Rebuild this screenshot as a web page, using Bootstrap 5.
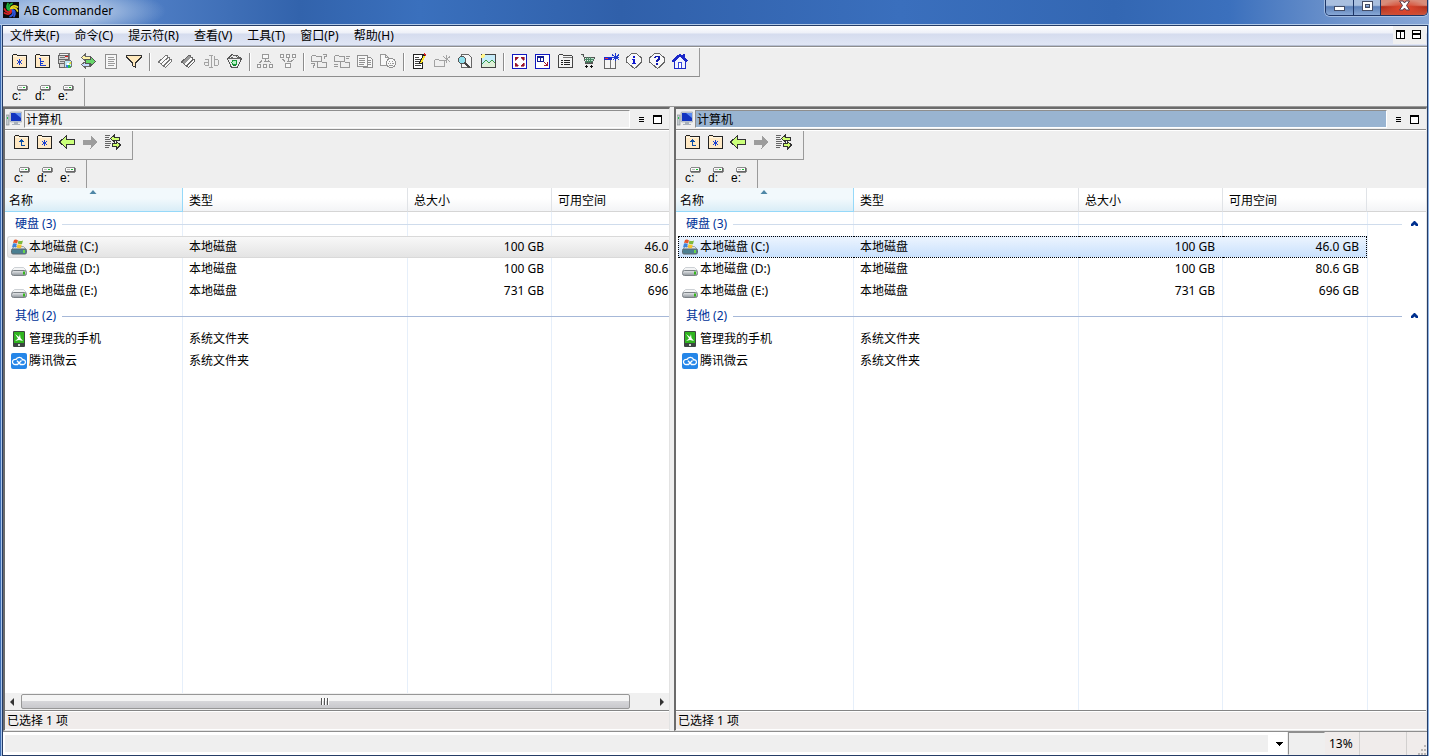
<!DOCTYPE html>
<html lang="zh-CN">
<head>
<meta charset="utf-8">
<meta name="viewport" content="width=device-width, initial-scale=1">
<title>AB Commander</title>
<link href="https://cdn.jsdelivr.net/npm/bootstrap@5.3.0/dist/css/bootstrap.min.css" rel="stylesheet">
<style>
  body { font: 12px/16px "Noto Sans", "Noto Sans CJK SC", sans-serif; color: #000; background: #6f9ad2; }
  svg { display: block; flex: none; }
  .ico { width: 16px; height: 16px; }
  .px { shape-rendering: crispEdges; }

  /* window frame */
  .frame { padding: 0 1px 0 2px; background: linear-gradient(90deg, #3b6ab2 1px, #a9c5ea 1px, #a9c5ea 2px, #8fb4e4 2px); }
  .caption { height: 25px; margin: 0 -1px 0 -2px; padding-left: 3px; border-bottom: 1px solid #b4cbe8;
    background:
      radial-gradient(ellipse 100px 24px at 66px 11px, #c3d4eccc 30%, #a5bfe388 65%, transparent 100%),
      linear-gradient(90deg, #7ea2d6 0, #4c7bc2 160px, #3263ac 300px, #3a70bd 420px, #3060aa 620px, #3a6fbd 900px, #3367b3 78%, #3b70bd 86%, #6f94cc 94%, #86a6d6 100%); }
  .caption h1 { font-size: 12px; line-height: 16px; padding: 3px 0 0 5px; }
  .logo { margin-top: 2px; }
  .client { border: 1px solid #253c66; background: #efefef; }

  .btn-tool { width: 23px; height: 28px; border: 0; padding: 0 0 2px 0; border-radius: 0; background: transparent; color: #000; font: inherit; display: flex; align-items: center; justify-content: center; flex: none; }
  .bar1 .btn-tool, .pbar1 .btn-tool { justify-content: flex-start; padding-left: 3px; }
  .btn-tool:hover { background: #dfe6f2; }
  .winbtns { height: 16px; border: 1px solid #1d3566; border-top: 0; border-radius: 0 0 5px 5px; overflow: hidden; box-shadow: 0 0 0 1px #c5d7ef99; margin-right: 1px; }
  .btn-tool.winbtn { height: 15px; width: 27px; padding: 0; align-items: flex-start; background: linear-gradient(#a9bfdf 0 35%, #5c80b8 45%, #88a8d6); }
  .btn-tool.winbtn + .winbtn { border-left: 1px solid #1d3566; }
  .btn-tool.close-win { width: 47px; background: radial-gradient(ellipse at 50% 60%, #d8452c 20%, transparent 75%), linear-gradient(#d88c7a 0 35%, #ad2a17 45%, #c9583f); }

  /* menu and tool bars */
  .menubar { height: 20px; padding: 0 1px 1px 0; gap: 1px; border-bottom: 1px solid #b7bfd2; background: linear-gradient(#fff, #edf0f8 7px, #d5dcee 8px, #e0e6f5); }
  .menubar a { padding: 2px 7px 0; color: #000; text-decoration: none; }
  .mdi { background: #f0f0f0; padding: 0 5px 2px 3px; gap: 7px; }
  .vsep { width: 2px; height: 18px; margin: 0 3px; border-left: 1px solid #8c8c8c; border-right: 1px solid #fff; }
  .strip { padding: 0 7px 0 5px; border-right: 1px solid #9a9a9a; }
  .bar1 { border-top: 1px solid #8e8e8e; box-shadow: inset 0 1px #fff; height: 31px; padding-top: 1px; }
  .bar1 .strip { border-bottom: 1px solid #8e8e8e; }
  .bar2 { height: 30px; border-bottom: 1px solid #9a9a9a; padding-top: 1px; }
  .btn-drive { flex-direction: column; align-items: stretch; justify-content: start; padding: 6px 3px 0 4px; font: 12px/12px "Liberation Sans", sans-serif; text-align: left; }
  .btn-drive svg { align-self: flex-end; width: 11px; height: 7px; }
  .btn-drive span { margin-top: -1px; }

  /* panes */
  .panes { display: grid; grid-template-columns: 667fr 753fr; gap: 4px; }
  .pane { border: solid; border-width: 2px 1px 1px 2px; border-color: #6b6b6b #e3e3e3 #e3e3e3 #6b6b6b; min-width: 0; }
  .pane-title { height: 21px; border-bottom: 1px solid #8e8e8e; padding-top: 1px; }
  .pane-title > .pcbox { width: 19px; padding: 1px 0 0 1px; }
  .pane-name { border: 1px solid; border-color: #8e8e8e #fff #fff #8e8e8e; margin-bottom: 1px; padding: 1px 0 0 1px; line-height: 15px; background: #f0f0f0; }
  .pane.current .pane-name { background: #99b4d1; }
  .pane-ctl { width: 39px; gap: 5px; padding-left: 6px; }
  .pane-ctl .btn-tool { width: 11px; height: 17px; padding: 0; }
  .pbar1 { height: 30px; border-top: 1px solid #fff; }
  .pbar1 .strip { border-bottom: 1px solid #9a9a9a; height: 29px; }
  .pbar1 .btn-tool { height: 24px; }
  .pbar2 { height: 28px; }

  .listing { background:
      linear-gradient(#e6effa, #e6effa) 177px 0 / 1px 100% no-repeat,
      linear-gradient(#e6effa, #e6effa) 402px 0 / 1px 100% no-repeat,
      linear-gradient(#e6effa, #e6effa) 546px 0 / 1px 100% no-repeat,
      linear-gradient(#e6effa, #e6effa) 691px 0 / 1px 100% no-repeat, #fff; overflow: hidden; }
  .files { table-layout: fixed; border-collapse: separate; border-spacing: 0; width: 100%; min-width: 691px; }
  .files th { height: 24px; padding: 3px 6px 0; font-weight: 400; border-right: 1px solid #e0e3e7; border-bottom: 1px solid #d5d5d5; background: linear-gradient(#fff 45%, #f3f4f6); }
  .files th:last-child { border-right: 0; }
  .files th.sorted { padding-left: 4px; border-right-color: #96d9f9; border-bottom-color: #96d9f9; position: relative; background: linear-gradient(#f2f9fc 45%, #d9edf7); }
  .sorted svg { position: absolute; top: 2px; left: 84px; }
  .files td { height: 22px; padding: 0 6px; white-space: nowrap; }
  .files td.edge { padding: 0; }
  .files td.fname { padding-left: 4px; }
  .fname .d-flex { gap: 2px; }
  .files td.num { text-align: right; padding-right: 8px; }
  .files .group td { height: 24px; padding: 0 7px 0 10px; color: #003399; }
  .files .group.later td { height: 26px; padding-top: 2px; }
  .rule { height: 1px; background: #cfdcec; margin: 0 8px 0 6px; }
  .later .rule { background: #a6b8d8; }
  .idle td:not(.edge, .rest) { background: linear-gradient(#f8f8f8, #e4e4e4); border: solid #d9d9d9; border-width: 1px 0; }
  .idle td.fname { border-left-width: 1px !important; padding-left: 3px !important; border-radius: 3px 0 0 3px; }
  .chosen td:not(.edge, .rest) { background: linear-gradient(#ecf4fe, #c9e1fd); border: dotted #000; border-width: 1px 0; }
  .chosen td.fname { border-left-width: 1px !important; padding-left: 3px !important; }
  .chosen td.last { border-right-width: 1px !important; padding-right: 7px !important; }

  .hscroll { height: 17px; background: #f0f0f0; }
  .hscroll .btn-tool { width: 16px; height: 17px; padding: 0 3px 0 0; }
  .hscroll .btn-tool:last-child { padding: 0 0 0 1px; }
  .thumb { width: 609px; border: 1px solid #979797; border-radius: 2px; margin: 1px 0; background: linear-gradient(#f5f5f5 0 45%, #d6d6d9 50%, #c8c8cc); }
  .pane-status { height: 20px; border-top: 1px solid #858585; background: #f0eceb; padding: 2px 2px 0; box-shadow: inset 0 1px #fff, inset 0 -1px #fff; }

  /* command line and status cells */
  .cmdrow { height: 24px; border-top: 1px solid #8e8e8e; }
  .cmdline { border: 3px solid #fff; border-left-width: 2px; background: #fff; margin-right: 1px; }
  .cmdline select { appearance: none; width: 100%; height: 17px; border: 0; border-radius: 0; background: linear-gradient(#efefef, #efefef) 0 0 / calc(100% - 16px) 100% no-repeat; }
  .cmdline svg { position: absolute; right: 1px; top: 7px; pointer-events: none; }
  .scell { border-right: 1px solid #d2d0cf; background: #f0eceb; padding: 4px 4px 0; }
  .scell.blank { background: #efefef; border: 1px solid; border-color: #8e8e8e #efefef #efefef #8e8e8e; }
</style>
</head>
<body>

<svg width="0" height="0" class="position-absolute" aria-hidden="true">
  <defs>
    <symbol id="fold" viewBox="0 0 16 16"><path d="M1.500 3.500V2.500L2.500 1.500H5.500L6.500 2.500H15.500V14.500H1.500Z" fill="#ffe9c4" stroke="#222"/><path d="M2 3.500H15" stroke="#fff6e2"/></symbol>
    <symbol id="star" viewBox="0 0 16 16"><use href="#fold"/><path d="M8.500 6V12M6 7L11 11M11 7L6 11" stroke="#1b3fd0"/></symbol>
    <symbol id="tree" viewBox="0 0 16 16"><use href="#fold"/><path d="M5 5.500H7M6.500 6V12.500M7 8.500H10M7 10.500H9M7 12.500H12" stroke="#1b3fd0" fill="none"/></symbol>
    <symbol id="up" viewBox="0 0 16 16"><use href="#fold"/><path d="M8.500 5V11.500H12M6 7.500H11M7 6.500H10" stroke="#0b4fa8" fill="none"/></symbol>
    <symbol id="server" viewBox="0 0 16 16"><path d="M1.500 2.500L3 .5H12.500L11.500 2.500" fill="#f2f2f2" stroke="#777"/><path d="M1.500 2.500H11.500V6.500H1.500ZM1.500 6.500H11.500V10.500H1.500ZM2.500 10.500H10V14.500H2.500Z" fill="#d5d5d5" stroke="#666"/><path d="M12.500 1V7" stroke="#888"/><path d="M8 3.500H11" stroke="#e02020"/><path d="M3 4.500H8M3 8.500H8" stroke="#777"/><circle cx="11" cy="11" r="4" fill="#bfe7f3" stroke="#777"/><path d="M11 11L14 8V11Z" fill="#e5e52c"/><path d="M11 11L8 13L11 15Z" fill="#3a7ee0"/><path d="M11 11L14 14L11 15Z" fill="#27bd4d"/><rect x="10" y="10" width="2" height="2" fill="#fff"/></symbol>
    <symbol id="swap" viewBox="0 0 16 16"><path d="M1.500 4.500L5.500 1V3.500H10.500V6H5.500V8Z" fill="#fff3a8" stroke="#666"/><path d="M1.500 11.500L5.500 8.500V10.500H9V13.500H5.500V15Z" fill="#c9d9ff" stroke="#666"/><path d="M5.500 6.500H10.500V3.500L15.500 8.500L10.500 13V10.500H5.500Z" fill="#66d66a" stroke="#555"/></symbol>
    <symbol id="list" viewBox="0 0 16 16"><path d="M2.500 1.500H13.500V15.500H2.500Z" fill="#f6f6f6" stroke="#8e8e8e"/><path d="M5 4.500H11M5 6.500H12M5 8.500H11M5 10.500H12M5 12.500H11" stroke="#9b9b9b"/></symbol>
    <symbol id="funnel" viewBox="0 0 16 16"><path d="M.5 2.500H15.500V4L9.500 10V14.500L6.500 12.500V10L.5 4Z" fill="#ffe9bd" stroke="#333"/></symbol>
    <symbol id="mark-a" viewBox="0 0 16 16"><path d="M1.500 9L8.500 2.500H10.500V4.500H12.500V6H14.500V8.500L8.500 14.500L6.500 13Z" fill="#fbfbfb" stroke="#777"/><path d="M4 11L11 4.500M6.500 13L13 6.500" stroke="#777" fill="none"/></symbol>
    <symbol id="mark-b" viewBox="0 0 16 16"><path d="M1.500 9L8.500 2.500H10.500V4.500H12.500V6H14.500V8.500L8.500 14.500L6.500 13Z" fill="#fbfbfb" stroke="#666"/><path d="M2 9L9 3L11 5L4.500 11Z" fill="#999"/><path d="M6.500 13L13 6.500" stroke="#666"/></symbol>
    <symbol id="rename" viewBox="0 0 16 16"><path d="M1.500 6.500H5.500V12.500H2.500L1.500 11.500V9.500H5M11.500 2.500V12.500H14L15.500 11.500V7.500L14 6.500H12M6 2.500H10M6 14.500H10M8.500 3V14" stroke="#a4a4a4" fill="none"/></symbol>
    <symbol id="bin" viewBox="0 0 16 16"><path d="M1.500 5.500L4 3.500L6 1.500L8.500 3L11 2.500L15.500 5.500L11.500 14.500H5.500Z" fill="#eee" stroke="#555"/><path d="M2 5.500H15M4 3.500L7 5M8 2L13 5" stroke="#666"/><circle cx="8.500" cy="9.500" r="2.500" fill="#b9f0c4" stroke="#1a9b3c"/><path d="M7 12.500H10" stroke="#128030"/></symbol>
    <symbol id="org-a" viewBox="0 0 16 16"><path d="M5.500 1.500H11.500V5.500H5.500ZM.5 11.500H3.500V14.500H.5ZM6.500 11.500H9.500V14.500H6.500ZM12.500 11.500H15.500V14.500H12.500ZM8.500 6V9M2.500 10L5 7.500M14 10L11 7.500M6.500 8.500H10.500" stroke="#989898" fill="#f8f8f8"/></symbol>
    <symbol id="org-b" viewBox="0 0 16 16"><path d="M.5 1.500H3.500V4.500H.5ZM6.500 1.500H9.500V4.500H6.500ZM12.500 1.500H15.500V4.500H12.500ZM5.500 10.500H10.500V14.500H5.500ZM8.500 5V9M2.500 6L5 8.500M14 6L11 8.500M6.500 8.500H10.500" stroke="#989898" fill="#f8f8f8"/></symbol>
    <symbol id="fold-q" viewBox="0 0 16 16"><path d="M.5 8V3.500L1.500 2.500H4.500L5.500 3.500H10.500V8ZM6.500 14.500V9.500L7.500 8.500H10.500L11.500 9.500H15.500V14.500ZM12 1.500H15V3.500H13.500V6M0 10.500H3V12.500H2V15" stroke="#989898" fill="none"/></symbol>
    <symbol id="fold-e" viewBox="0 0 16 16"><path d="M.5 8V3.500L1.500 2.500H4.500L5.500 3.500H10.500V8ZM6.500 14.500V9.500L7.500 8.500H10.500L11.500 9.500H15.500V14.500ZM12 3.500H16M12 5.500H15M0 11.500H4M0 13.500H4" stroke="#989898" fill="none"/></symbol>
    <symbol id="docs" viewBox="0 0 16 16"><path d="M.5 2.500H10.500V13.500H.5ZM10.500 4.500H13.500L15.500 6.500V14.500H6M2 5.500H8M2 7.500H8M2 9.500H8M2 11.500H7M10 7.500H14M10 9.500H14M10 11.500H14" stroke="#909090" fill="#f8f8f8"/></symbol>
    <symbol id="doc-net" viewBox="0 0 16 16"><path d="M.5 1.500H5.500L8.500 4.500V12.500H.5ZM5.500 1.500V4.500H8.500" stroke="#989898" fill="#f8f8f8"/><circle cx="11" cy="10" r="4.500" fill="#f8f8f8" stroke="#909090"/><path d="M9 8.500H10M12 8.500H13M8 10.500H9M10 10.500H11M12 10.500H14M9 12.500H13" stroke="#999"/></symbol>
    <symbol id="note" viewBox="0 0 16 16"><path d="M2.500 1.500H11.500V15.500H2.500Z" fill="#fff" stroke="#222"/><path d="M4 4.500H8M4 6.500H10M4 8.500H9M4 10.500H9M4 12.500H10" stroke="#444"/><path d="M13.500 2L9 11" stroke="#222" stroke-width="3"/><path d="M13.500 3L10 10" stroke="#ffe72d" stroke-width="1.500"/><path d="M13 1L15 2" stroke="#d22" stroke-width="2"/></symbol>
    <symbol id="fold-new" viewBox="0 0 16 16"><path d="M.5 13.500V7.500L1.500 6.500H4.500L5.500 7.500H10.500V13.500ZM12.500 2V10M9 3.500L16 8.500M16 3.500L10 8.500" stroke="#a2a2a2" fill="none"/></symbol>
    <symbol id="find" viewBox="0 0 16 16"><path d="M4.500 1.500H11.500L14.500 4.500V14.500H4.500Z" fill="#f5f5f5" stroke="#666"/><path d="M7 9L13 15" stroke="#444" stroke-width="2"/><circle cx="5" cy="7" r="3.500" fill="#8fe0ee" stroke="#555"/></symbol>
    <symbol id="pic" viewBox="0 0 16 16"><path d="M1.500 1.500H15.500V14.500H1.500Z" fill="#c6ecfa" stroke="#444"/><path d="M2 12L6 8L9 10L12 8L15 10V14H2Z" fill="#dff0d8"/><path d="M2 11L6 7L9 10L12 7L15 10" stroke="#3c9c4c" fill="none"/><circle cx="3" cy="3" r="2" fill="#fff38a"/></symbol>
    <symbol id="full" viewBox="0 0 16 16"><path d="M1.500 1.500H15.500V15.500H1.500Z" fill="#fff" stroke="#1018c0"/><path d="M4 7V4H7V5H6V6H5V7ZM13 7V4H10V5H11V6H12V7ZM4 10V13H7V12H6V11H5V10ZM13 10V13H10V12H11V11H12V10Z" fill="#98142c" stroke="#98142c" stroke-width=".6"/></symbol>
    <symbol id="shrink" viewBox="0 0 16 16"><path d="M1.500 1.500H15.500V15.500H1.500Z" fill="#fff" stroke="#1018c0"/><path d="M3.500 4.500H9.500V8.500H3.500ZM6.500 4V9M3 3.500H10" fill="#fff" stroke="#101a90"/><path d="M10 9L13 12M10 12.500H13.500V9" stroke="#a01c30" fill="none"/></symbol>
    <symbol id="opts" viewBox="0 0 16 16"><path d="M1.500 14.500V2.500L2.500 1.500H5.500L6.500 2.500H14.500L15.500 3.500V14.500Z" fill="#f4f4f4" stroke="#444"/><path d="M6 4.500H15" stroke="#777"/><path d="M4 7.500H6M7 7.500H13M4 9.500H6M7 9.500H13M4 11.500H6M7 11.500H13" stroke="#222"/></symbol>
    <symbol id="cart" viewBox="0 0 16 16"><path d="M1 1.500H3.500L5.500 10.500H12.500M4 4.500H14.500L12.500 9.500H5" stroke="#555" fill="#b9e3cd"/><path d="M4 6.500H14M6.500 4V10M8.500 4V10M10.500 4V10M5 8.500H13" stroke="#4a8564"/><path d="M6 12V15M11 12V15M5 13.500H8M10 13.500H13" stroke="#111"/></symbol>
    <symbol id="win-new" viewBox="0 0 16 16"><path d="M1.500 4.500H12.500V15.500H1.500Z" fill="#f5f5f5" stroke="#666"/><path d="M1 4H9V7H1Z" fill="#1c2ad0"/><path d="M7.500 7V15" stroke="#777"/><path d="M2 5.500H5" stroke="#e33"/><path d="M12.500 0V8M9 1.500L16 7M16 1.500L10 7M9 4.500H16" stroke="#1c3ad0"/></symbol>
    <symbol id="balloon" viewBox="0 0 16 16"><path d="M5.500.5H10.500L15.500 5V9L11 13.500L8.500 15.500L6 13.500L.5 9V5Z" fill="#f8f8f8" stroke="#666"/></symbol>
    <symbol id="info" viewBox="0 0 16 16"><use href="#balloon"/><path d="M7 3H9V5H7ZM6 6H9V10H10V11H6V10H7V7H6Z" fill="#1018d0"/></symbol>
    <symbol id="help" viewBox="0 0 16 16"><use href="#balloon"/><path d="M5 5V4L6 3H10L11 4V6L9 8V9H7V7L9 6V4H7V5ZM7 10H9V12H7Z" fill="#1018b0"/></symbol>
    <symbol id="home" viewBox="0 0 16 16"><path d="M2.500 8V15.500H13.500V8L8 3Z" fill="#f0f3ff" stroke="#1c28c8"/><path d="M.5 8.500L8 1.500L15.500 8.500" stroke="#1c28c8" stroke-width="2" fill="none"/><path d="M6.500 15V9.500H9.500V15" fill="#fff" stroke="#3a48dd"/><path d="M12 1V5" stroke="#1c28c8" stroke-width="2"/></symbol>
    <symbol id="minidrive" viewBox="0 0 11 7"><path d="M1 1H10V2H11V6H10V7H1V6H0V2H1Z" fill="#8a8a8a"/><path d="M1 2H9V5H1Z" fill="#fafafa"/><path d="M9 2H10V6H1V5H9Z" fill="#666"/><path d="M2 3.500H5" stroke="#bbb"/><path d="M6 3.500H8" stroke="#18c030"/></symbol>
    <symbol id="back" viewBox="0 0 16 16"><path d="M.5 8L7.500 1.500V5.500H15.500V10.500H7.500V14.500Z" fill="#caff7a" stroke="#333"/></symbol>
    <symbol id="fwd" viewBox="0 0 16 16"><path d="M15.500 8L8.500 1.500V5.500H.5V10.500H8.500V14.500Z" fill="#9d9d9d"/></symbol>
    <symbol id="sync" viewBox="0 0 16 16"><path d="M0 1.500H5M0 3.500H4M0 5.500H5M0 7.500H6M0 9.500H6M0 11.500H5M0 13.500H4" stroke="#666"/><path d="M5.500 4.500L9.500 1V3.500H14.500V6.500H9.500V8Z" fill="#d0ff70" stroke="#333"/><path d="M15.500 11L11.500 7.500V9.500H7.500V12.500H11.500V15Z" fill="#d0ff70" stroke="#333"/></symbol>
    <symbol id="pc" viewBox="0 0 16 16"><rect x="0" y="4" width="3" height="10" fill="#c5cbd0" stroke="#7b8288" stroke-width=".6"/><rect x="1" y="6" width="1" height="2" fill="#2abf4b"/><rect x="4" y="1" width="12" height="10" rx="1" fill="#cfd6df" stroke="#8791a0" stroke-width=".6"/><rect x="5" y="2" width="10" height="8" fill="#1234c0"/><path d="M9 2H15V7Z" fill="#5d8cf0"/><path d="M8 11H12V13H14V14H6V13H8Z" fill="#a9b1bb"/></symbol>
    <linearGradient id="metal" x2="0" y2="1"><stop stop-color="#e9ebed"/><stop offset="1" stop-color="#8e959b"/></linearGradient>
    <symbol id="hdd" viewBox="0 0 16 16"><path d="M3.500 6.500H12.500L15.500 9.500H.5Z" fill="#f3f4f5" stroke="#c2c7cb" stroke-width=".8"/><rect x=".5" y="9.500" width="15" height="5" rx="2" fill="url(#metal)" stroke="#7b8186"/><rect x="12" y="10.500" width="2" height="3" fill="#35b51d"/></symbol>
    <symbol id="hddwin" viewBox="0 0 16 16"><path d="M3.500 7.500H12.500L15.500 10.500H.5Z" fill="#dfe4e8" stroke="#8b9399" stroke-width=".8"/><rect x=".5" y="10" width="15" height="5" rx="1.500" fill="#4b7f91" stroke="#5d686f"/><rect x="12" y="11" width="2" height="3" fill="#6ad44c"/><path d="M3 1Q5 0 7 1.500L6 4.500Q4 3.500 2 4Z" fill="#e8562a"/><path d="M7.500 1.500Q9.500 2.500 12 1.500L11 5Q8.500 5.500 6.700 4.500Z" fill="#7cb93c"/><path d="M2 4.500Q4 4 5.800 5L5 8.500Q3 7.500 1 8.500Z" fill="#3c83dc"/><path d="M6.500 5.200Q8.500 6 10.800 5.500L10 9Q7.500 9.500 5.600 8.500Z" fill="#f7c32e"/></symbol>
    <symbol id="phone" viewBox="0 0 16 16"><rect x="2" y="0" width="12" height="16" rx="1" fill="#3d4542"/><rect x="3" y="1" width="10" height="11" fill="#2fb41f"/><path d="M4 3L8 6L9 3L9.500 7L12 10L8 9L4 10L7 7.500Z" fill="#fff"/><rect x="7" y="13" width="2" height="2" fill="#d6dbd8"/></symbol>
    <symbol id="cloud" viewBox="0 0 16 16"><rect width="16" height="16" rx="2" fill="#2586e8"/><path d="M4.500 11.500A2.600 2.600 0 1 1 5 6.500A3.500 3.500 0 0 1 11.600 6.800A2.400 2.400 0 1 1 11.500 11.500H9.500L6 7.800M4.500 11.500H6.500L10.500 7.500" fill="none" stroke="#fff" stroke-width="1.300"/></symbol>
    <symbol id="chev" viewBox="0 0 9 6"><path d="M4 0H5L8 3V5H6L4.500 3.500L3 5H1V3Z" fill="#00308f"/></symbol>
  </defs>
</svg>

<div class="frame min-vh-100 d-flex flex-column">
  <header class="caption d-flex align-items-start">
    <svg class="ico logo" viewBox="0 0 16 16" aria-hidden="true"><rect width="16" height="16" fill="#0c0c0c"/><g fill="none" stroke-width="1.700" stroke-linecap="round"><path d="M8 8C5 7 5 3 9 1.500M8 8C4 9 3 5 5 1.500" stroke="#1eb53a"/><path d="M8 8C9 5 13 5 14.500 9M8 8C7 4 11 3 14.500 5" stroke="#e8d81c"/><path d="M8 8C11 9 11 13 7 14.500M8 8C12 7 13 11 11 14.500" stroke="#2f55dd"/><path d="M8 8C7 11 3 11 1.500 7M8 8C9 12 5 13 1.500 11" stroke="#d92525"/></g></svg>
    <h1 class="fw-normal mb-0">AB Commander</h1>
    <div class="winbtns d-flex ms-auto">
      <button class="btn-tool winbtn" type="button" aria-label="最小化"><svg class="px" width="13" height="12" viewBox="0 0 13 12"><path d="M1.500 6.500H11.500V10.500H1.500Z" fill="#fff" stroke="#444d66"/></svg></button>
      <button class="btn-tool winbtn" type="button" aria-label="最大化"><svg class="px" width="13" height="12" viewBox="0 0 13 12"><path d="M1.500 1.500H11.500V10.500H1.500ZM4.500 4.500V7.500H8.500V4.500Z" fill="#fff" fill-rule="evenodd" stroke="#444d66"/></svg></button>
      <button class="btn-tool winbtn close-win" type="button" aria-label="关闭"><svg width="13" height="12" viewBox="0 0 13 12"><path d="M1.500 1H5L6.500 3L8 1H11.500L8.500 5.500L11.500 10H8L6.500 8L5 10H1.500L4.500 5.500Z" fill="#fff" stroke="#5c3a48"/></svg></button>
    </div>
  </header>

  <div class="client flex-grow-1 d-flex flex-column">
    <nav class="menubar d-flex" aria-label="菜单">
      <a href="#">文件夹(F)</a><a href="#">命令(C)</a><a href="#">提示符(R)</a><a href="#">查看(V)</a><a href="#">工具(T)</a><a href="#">窗口(P)</a><a href="#">帮助(H)</a>
      <div class="mdi d-flex align-items-center ms-auto">
        <svg class="px" width="9" height="9" viewBox="0 0 9 9"><path d="M.5 1H8.500V8.500H.5ZM4.500 1V8M0 .5H9" fill="#fff" stroke="#000"/></svg>
        <svg class="px" width="9" height="9" viewBox="0 0 9 9"><path d="M.5.5H8.500V8.500H.5ZM0 4.500H9M0 3.500H9" fill="#fff" stroke="#000"/></svg>
      </div>
    </nav>

    <div class="bar1 d-flex">
      <div class="strip d-flex align-items-center" role="toolbar" aria-label="工具栏">
        <button class="btn-tool" type="button" aria-label="新建"><svg class="ico px"><use href="#star"/></svg></button>
        <button class="btn-tool" type="button" aria-label="树"><svg class="ico px"><use href="#tree"/></svg></button>
        <button class="btn-tool" type="button" aria-label="驱动器"><svg class="ico px"><use href="#server"/></svg></button>
        <button class="btn-tool" type="button" aria-label="转到"><svg class="ico px"><use href="#swap"/></svg></button>
        <button class="btn-tool" type="button" aria-label="列表"><svg class="ico px"><use href="#list"/></svg></button>
        <button class="btn-tool" type="button" aria-label="筛选"><svg class="ico px"><use href="#funnel"/></svg></button>
        <span class="vsep"></span>
        <button class="btn-tool" type="button" aria-label="选择"><svg class="ico px"><use href="#mark-a"/></svg></button>
        <button class="btn-tool" type="button" aria-label="反选"><svg class="ico px"><use href="#mark-b"/></svg></button>
        <button class="btn-tool" type="button" aria-label="重命名"><svg class="ico px"><use href="#rename"/></svg></button>
        <button class="btn-tool" type="button" aria-label="删除"><svg class="ico px"><use href="#bin"/></svg></button>
        <span class="vsep"></span>
        <button class="btn-tool" type="button" aria-label="拆分"><svg class="ico px"><use href="#org-a"/></svg></button>
        <button class="btn-tool" type="button" aria-label="合并"><svg class="ico px"><use href="#org-b"/></svg></button>
        <span class="vsep"></span>
        <button class="btn-tool" type="button" aria-label="比较文件夹"><svg class="ico px"><use href="#fold-q"/></svg></button>
        <button class="btn-tool" type="button" aria-label="同步文件夹"><svg class="ico px"><use href="#fold-e"/></svg></button>
        <button class="btn-tool" type="button" aria-label="复制"><svg class="ico px"><use href="#docs"/></svg></button>
        <button class="btn-tool" type="button" aria-label="校验"><svg class="ico px"><use href="#doc-net"/></svg></button>
        <span class="vsep"></span>
        <button class="btn-tool" type="button" aria-label="编辑"><svg class="ico px"><use href="#note"/></svg></button>
        <button class="btn-tool" type="button" aria-label="新建文件夹"><svg class="ico px"><use href="#fold-new"/></svg></button>
        <button class="btn-tool" type="button" aria-label="查找"><svg class="ico px"><use href="#find"/></svg></button>
        <button class="btn-tool" type="button" aria-label="图片"><svg class="ico px"><use href="#pic"/></svg></button>
        <span class="vsep"></span>
        <button class="btn-tool" type="button" aria-label="全屏"><svg class="ico px"><use href="#full"/></svg></button>
        <button class="btn-tool" type="button" aria-label="缩小"><svg class="ico px"><use href="#shrink"/></svg></button>
        <button class="btn-tool" type="button" aria-label="选项"><svg class="ico px"><use href="#opts"/></svg></button>
        <button class="btn-tool" type="button" aria-label="购买"><svg class="ico px"><use href="#cart"/></svg></button>
        <button class="btn-tool" type="button" aria-label="新窗口"><svg class="ico px"><use href="#win-new"/></svg></button>
        <button class="btn-tool" type="button" aria-label="信息"><svg class="ico px"><use href="#info"/></svg></button>
        <button class="btn-tool" type="button" aria-label="帮助"><svg class="ico px"><use href="#help"/></svg></button>
        <button class="btn-tool" type="button" aria-label="主页"><svg class="ico px"><use href="#home"/></svg></button>
      </div>
    </div>
    <div class="bar2 d-flex">
      <div class="strip d-flex">
        <button class="btn-tool btn-drive" type="button"><svg class="px"><use href="#minidrive"/></svg><span>c:</span></button>
        <button class="btn-tool btn-drive" type="button"><svg class="px"><use href="#minidrive"/></svg><span>d:</span></button>
        <button class="btn-tool btn-drive" type="button"><svg class="px"><use href="#minidrive"/></svg><span>e:</span></button>
      </div>
    </div>

    <main class="panes flex-grow-1">
      <section class="pane d-flex flex-column">
        <div class="pane-title d-flex">
          <div class="pcbox"><svg class="ico"><use href="#pc"/></svg></div>
          <div class="pane-name flex-grow-1">计算机</div>
          <div class="pane-ctl d-flex align-items-center">
            <button class="btn-tool" type="button" aria-label="菜单"><svg class="px" width="5" height="7" viewBox="0 0 5 7"><path d="M0 1.500H5M0 3.500H5M0 5.500H5" stroke="#000"/></svg></button>
            <button class="btn-tool" type="button" aria-label="最大化"><svg class="px" width="9" height="9" viewBox="0 0 9 9"><path d="M.5 1H8.500V8.500H.5ZM0 .5H9" fill="#fff" stroke="#000"/></svg></button>
          </div>
        </div>
        <div class="pbar1 d-flex">
          <div class="strip d-flex">
            <button class="btn-tool" type="button" aria-label="向上"><svg class="ico px"><use href="#up"/></svg></button>
            <button class="btn-tool" type="button" aria-label="新建"><svg class="ico px"><use href="#star"/></svg></button>
            <button class="btn-tool" type="button" aria-label="后退"><svg class="ico px"><use href="#back"/></svg></button>
            <button class="btn-tool" type="button" aria-label="前进"><svg class="ico px"><use href="#fwd"/></svg></button>
            <button class="btn-tool" type="button" aria-label="同步"><svg class="ico px"><use href="#sync"/></svg></button>
          </div>
        </div>
        <div class="pbar2 d-flex">
          <div class="strip d-flex">
            <button class="btn-tool btn-drive" type="button"><svg class="px"><use href="#minidrive"/></svg><span>c:</span></button>
            <button class="btn-tool btn-drive" type="button"><svg class="px"><use href="#minidrive"/></svg><span>d:</span></button>
            <button class="btn-tool btn-drive" type="button"><svg class="px"><use href="#minidrive"/></svg><span>e:</span></button>
          </div>
        </div>
        <div class="listing flex-grow-1">
          <table class="files">
            <colgroup><col style="width:2px"><col style="width:176px"><col style="width:225px"><col style="width:144px"><col style="width:144px"><col></colgroup>
            <thead><tr><th colspan="2" class="sorted">名称<svg width="8" height="4" viewBox="0 0 8 4"><path d="M4 0L7.500 4H.5Z" fill="#4f87a6"/></svg></th><th>类型</th><th>总大小</th><th>可用空间</th><th></th></tr></thead>
            <tbody>
              <tr class="group"><td colspan="6"><div class="d-flex align-items-center">硬盘 (3)<div class="rule flex-grow-1"></div></div></td></tr>
              <tr class="idle"><td class="edge"></td><td class="fname"><div class="d-flex align-items-center"><svg class="ico"><use href="#hddwin"/></svg><span>本地磁盘 (C:)</span></div></td><td>本地磁盘</td><td class="num">100 GB</td><td class="num last">46.0 GB</td><td class="rest"></td></tr>
              <tr><td class="edge"></td><td class="fname"><div class="d-flex align-items-center"><svg class="ico"><use href="#hdd"/></svg><span>本地磁盘 (D:)</span></div></td><td>本地磁盘</td><td class="num">100 GB</td><td class="num">80.6 GB</td><td></td></tr>
              <tr><td class="edge"></td><td class="fname"><div class="d-flex align-items-center"><svg class="ico"><use href="#hdd"/></svg><span>本地磁盘 (E:)</span></div></td><td>本地磁盘</td><td class="num">731 GB</td><td class="num">696 GB</td><td></td></tr>
              <tr class="group later"><td colspan="6"><div class="d-flex align-items-center">其他 (2)<div class="rule flex-grow-1"></div></div></td></tr>
              <tr><td class="edge"></td><td class="fname"><div class="d-flex align-items-center"><svg class="ico"><use href="#phone"/></svg><span>管理我的手机</span></div></td><td>系统文件夹</td><td></td><td></td><td></td></tr>
              <tr><td class="edge"></td><td class="fname"><div class="d-flex align-items-center"><svg class="ico"><use href="#cloud"/></svg><span>腾讯微云</span></div></td><td>系统文件夹</td><td></td><td></td><td></td></tr>
            </tbody>
          </table>
        </div>
        <div class="hscroll d-flex">
          <button class="btn-tool" type="button" aria-label="向左"><svg width="4" height="8" viewBox="0 0 4 8"><path d="M4 0V8L0 4Z" fill="#333"/></svg></button>
          <div class="thumb d-flex justify-content-center align-items-center"><svg class="px" width="9" height="7" viewBox="0 0 9 7"><path d="M.5 0V7M3.500 0V7M6.500 0V7" stroke="#555"/><path d="M1.500 0V7M4.500 0V7M7.500 0V7" stroke="#fff"/></svg></div>
          <button class="btn-tool ms-auto" type="button" aria-label="向右"><svg width="4" height="8" viewBox="0 0 4 8"><path d="M0 0V8L4 4Z" fill="#333"/></svg></button>
        </div>
        <div class="pane-status">已选择 1 项</div>
      </section>

      <section class="pane current d-flex flex-column">
        <div class="pane-title d-flex">
          <div class="pcbox"><svg class="ico"><use href="#pc"/></svg></div>
          <div class="pane-name flex-grow-1">计算机</div>
          <div class="pane-ctl d-flex align-items-center">
            <button class="btn-tool" type="button" aria-label="菜单"><svg class="px" width="5" height="7" viewBox="0 0 5 7"><path d="M0 1.500H5M0 3.500H5M0 5.500H5" stroke="#000"/></svg></button>
            <button class="btn-tool" type="button" aria-label="最大化"><svg class="px" width="9" height="9" viewBox="0 0 9 9"><path d="M.5 1H8.500V8.500H.5ZM0 .5H9" fill="#fff" stroke="#000"/></svg></button>
          </div>
        </div>
        <div class="pbar1 d-flex">
          <div class="strip d-flex">
            <button class="btn-tool" type="button" aria-label="向上"><svg class="ico px"><use href="#up"/></svg></button>
            <button class="btn-tool" type="button" aria-label="新建"><svg class="ico px"><use href="#star"/></svg></button>
            <button class="btn-tool" type="button" aria-label="后退"><svg class="ico px"><use href="#back"/></svg></button>
            <button class="btn-tool" type="button" aria-label="前进"><svg class="ico px"><use href="#fwd"/></svg></button>
            <button class="btn-tool" type="button" aria-label="同步"><svg class="ico px"><use href="#sync"/></svg></button>
          </div>
        </div>
        <div class="pbar2 d-flex">
          <div class="strip d-flex">
            <button class="btn-tool btn-drive" type="button"><svg class="px"><use href="#minidrive"/></svg><span>c:</span></button>
            <button class="btn-tool btn-drive" type="button"><svg class="px"><use href="#minidrive"/></svg><span>d:</span></button>
            <button class="btn-tool btn-drive" type="button"><svg class="px"><use href="#minidrive"/></svg><span>e:</span></button>
          </div>
        </div>
        <div class="listing flex-grow-1">
          <table class="files">
            <colgroup><col style="width:2px"><col style="width:176px"><col style="width:225px"><col style="width:144px"><col style="width:144px"><col></colgroup>
            <thead><tr><th colspan="2" class="sorted">名称<svg width="8" height="4" viewBox="0 0 8 4"><path d="M4 0L7.500 4H.5Z" fill="#4f87a6"/></svg></th><th>类型</th><th>总大小</th><th>可用空间</th><th></th></tr></thead>
            <tbody>
              <tr class="group"><td colspan="6"><div class="d-flex align-items-center">硬盘 (3)<div class="rule flex-grow-1"></div><svg width="9" height="6"><use href="#chev"/></svg></div></td></tr>
              <tr class="chosen"><td class="edge"></td><td class="fname"><div class="d-flex align-items-center"><svg class="ico"><use href="#hddwin"/></svg><span>本地磁盘 (C:)</span></div></td><td>本地磁盘</td><td class="num">100 GB</td><td class="num last">46.0 GB</td><td class="rest"></td></tr>
              <tr><td class="edge"></td><td class="fname"><div class="d-flex align-items-center"><svg class="ico"><use href="#hdd"/></svg><span>本地磁盘 (D:)</span></div></td><td>本地磁盘</td><td class="num">100 GB</td><td class="num">80.6 GB</td><td></td></tr>
              <tr><td class="edge"></td><td class="fname"><div class="d-flex align-items-center"><svg class="ico"><use href="#hdd"/></svg><span>本地磁盘 (E:)</span></div></td><td>本地磁盘</td><td class="num">731 GB</td><td class="num">696 GB</td><td></td></tr>
              <tr class="group later"><td colspan="6"><div class="d-flex align-items-center">其他 (2)<div class="rule flex-grow-1"></div><svg width="9" height="6"><use href="#chev"/></svg></div></td></tr>
              <tr><td class="edge"></td><td class="fname"><div class="d-flex align-items-center"><svg class="ico"><use href="#phone"/></svg><span>管理我的手机</span></div></td><td>系统文件夹</td><td></td><td></td><td></td></tr>
              <tr><td class="edge"></td><td class="fname"><div class="d-flex align-items-center"><svg class="ico"><use href="#cloud"/></svg><span>腾讯微云</span></div></td><td>系统文件夹</td><td></td><td></td><td></td></tr>
            </tbody>
          </table>
        </div>
        <div class="pane-status">已选择 1 项</div>
      </section>
    </main>

    <footer class="cmdrow d-flex">
      <div class="cmdline flex-grow-1 position-relative">
        <select aria-label="命令行"><option></option></select>
        <svg class="px" width="8" height="4" viewBox="0 0 8 4"><path d="M0 0H8L4 4Z" fill="#000"/></svg>
      </div>
      <div class="scell blank" style="width:37px"></div>
      <div class="scell" style="width:35px">13%</div>
      <div class="scell" style="width:47px"></div>
      <div class="scell d-flex align-items-end justify-content-end px-0 border-0" style="width:20px"><svg class="px" width="10" height="10" viewBox="0 0 10 10"><path d="M7 0H9V2H7ZM4 4H6V6H4ZM7 4H9V6H7ZM1 8H3V10H1ZM4 8H6V10H4ZM7 8H9V10H7Z" fill="#b9b5b4"/></svg></div>
    </footer>
  </div>
</div>

<script src="https://cdn.jsdelivr.net/npm/bootstrap@5.3.0/dist/js/bootstrap.bundle.min.js"></script>
</body>
</html>
